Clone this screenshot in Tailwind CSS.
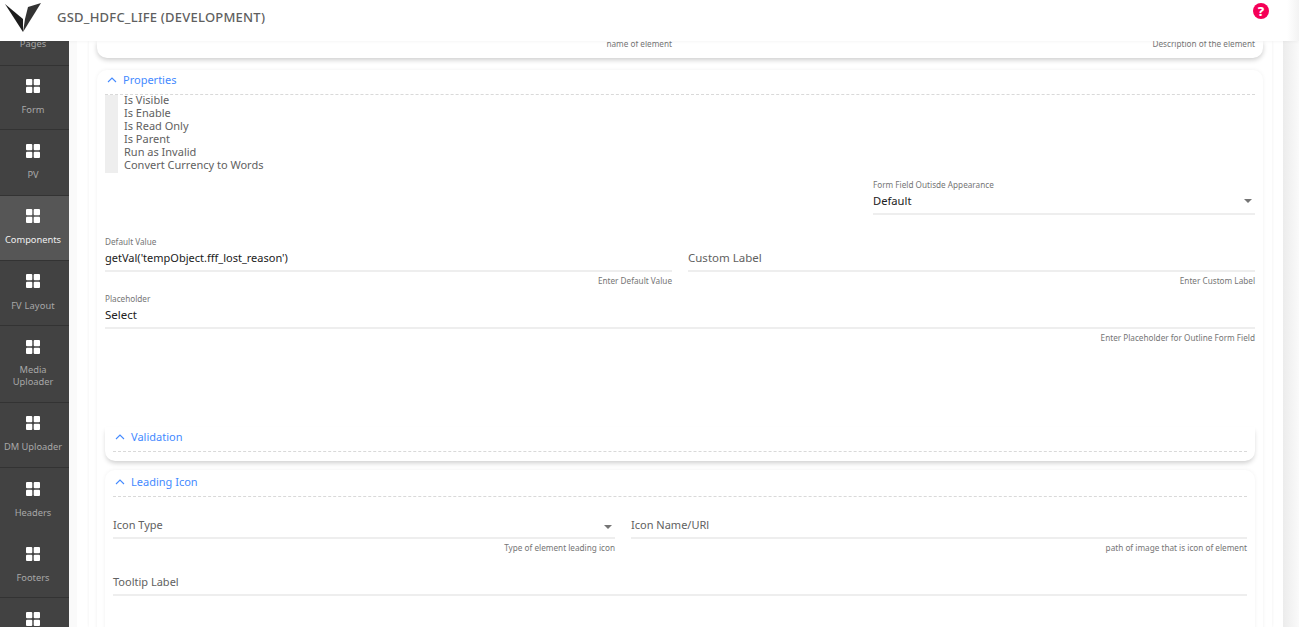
<!DOCTYPE html>
<html>
<head>
<meta charset="utf-8">
<script src="https://cdn.jsdelivr.net/npm/@tailwindcss/browser@4"></script>
</head>
<body class="h-[627px] w-[1299px] overflow-hidden bg-white font-['Noto_Sans','Open_Sans',sans-serif] text-[#616161]">
<header class="relative z-10 flex h-[41px] items-center bg-white pl-[5px] shadow-[0_1px_3px_rgba(0,0,0,0.04)]">
  <svg width="37" height="30" viewBox="0 0 37 30" class="-mt-[5px] shrink-0"><path d="M0 1 L18 16 L18 29 Z" fill="#1c1c1c"/><path d="M36 0 L23 4 L20 16 L18 29 Z" fill="#333"/></svg>
  <div class="-mt-[5px] ml-[15px] text-[13px] font-medium tracking-[0.22px] text-[#5f5f5f]">GSD_HDFC_LIFE (DEVELOPMENT)</div>
  <div class="ml-auto mr-[30px] -mt-[19px] flex h-4 w-4 items-center justify-center rounded-full bg-[#f50057] text-[13px] font-extrabold leading-none text-white">?</div>
  <div class="absolute right-0 top-0 h-full w-[12px] bg-gradient-to-r from-white to-[#f3f3f3]"></div>
</header>
<div class="flex h-[586px] overflow-hidden">
  <nav class="w-[69px] shrink-0 bg-[#424242] text-center text-[9.3px] leading-[12px] text-[#a8a8a8]">
    <div class="flex h-[25px] items-start justify-center border-b border-[#333] pr-[3px]"><span class="-mt-[3px]">Pages</span></div>
    <a class="flex h-[64px] flex-col items-center border-b border-[#333] pr-[3px] pt-[13px]"><svg width="14" height="14" viewBox="0 0 14 14" fill="#fff"><rect width="6.3" height="6.3" rx="1"/><rect x="7.7" width="6.3" height="6.3" rx="1"/><rect y="7.7" width="6.3" height="6.3" rx="1"/><rect x="7.7" y="7.7" width="6.3" height="6.3" rx="1"/></svg><span class="mt-[11px]">Form</span></a>
    <a class="flex h-[66px] flex-col items-center border-b border-[#333] pr-[3px] pt-[14px]"><svg width="14" height="14" viewBox="0 0 14 14" fill="#fff"><rect width="6.3" height="6.3" rx="1"/><rect x="7.7" width="6.3" height="6.3" rx="1"/><rect y="7.7" width="6.3" height="6.3" rx="1"/><rect x="7.7" y="7.7" width="6.3" height="6.3" rx="1"/></svg><span class="mt-[11px]">PV</span></a>
    <a class="flex h-[65px] flex-col items-center border-b border-[#333] bg-[#565656] pr-[3px] pt-[13px] text-[#f0f0f0]"><svg width="14" height="14" viewBox="0 0 14 14" fill="#fff"><rect width="6.3" height="6.3" rx="1"/><rect x="7.7" width="6.3" height="6.3" rx="1"/><rect y="7.7" width="6.3" height="6.3" rx="1"/><rect x="7.7" y="7.7" width="6.3" height="6.3" rx="1"/></svg><span class="mt-[11px]">Components</span></a>
    <a class="flex h-[65px] flex-col items-center border-b border-[#333] pr-[3px] pt-[13px]"><svg width="14" height="14" viewBox="0 0 14 14" fill="#fff"><rect width="6.3" height="6.3" rx="1"/><rect x="7.7" width="6.3" height="6.3" rx="1"/><rect y="7.7" width="6.3" height="6.3" rx="1"/><rect x="7.7" y="7.7" width="6.3" height="6.3" rx="1"/></svg><span class="mt-[12px] tracking-[0.15px]">FV Layout</span></a>
    <a class="flex h-[77px] flex-col items-center border-b border-[#333] pr-[3px] pt-[14px]"><svg width="14" height="14" viewBox="0 0 14 14" fill="#fff"><rect width="6.3" height="6.3" rx="1"/><rect x="7.7" width="6.3" height="6.3" rx="1"/><rect y="7.7" width="6.3" height="6.3" rx="1"/><rect x="7.7" y="7.7" width="6.3" height="6.3" rx="1"/></svg><span class="mt-[10px] leading-[12px]">Media<br>Uploader</span></a>
    <a class="flex h-[65px] flex-col items-center border-b border-[#333] pr-[3px] pt-[13px]"><svg width="14" height="14" viewBox="0 0 14 14" fill="#fff"><rect width="6.3" height="6.3" rx="1"/><rect x="7.7" width="6.3" height="6.3" rx="1"/><rect y="7.7" width="6.3" height="6.3" rx="1"/><rect x="7.7" y="7.7" width="6.3" height="6.3" rx="1"/></svg><span class="mt-[11px]">DM Uploader</span></a>
    <a class="flex h-[65px] flex-col items-center pr-[3px] pt-[14px]"><svg width="14" height="14" viewBox="0 0 14 14" fill="#fff"><rect width="6.3" height="6.3" rx="1"/><rect x="7.7" width="6.3" height="6.3" rx="1"/><rect y="7.7" width="6.3" height="6.3" rx="1"/><rect x="7.7" y="7.7" width="6.3" height="6.3" rx="1"/></svg><span class="mt-[11px]">Headers</span></a>
    <a class="flex h-[65px] flex-col items-center border-b border-[#333] pr-[3px] pt-[14px]"><svg width="14" height="14" viewBox="0 0 14 14" fill="#fff"><rect width="6.3" height="6.3" rx="1"/><rect x="7.7" width="6.3" height="6.3" rx="1"/><rect y="7.7" width="6.3" height="6.3" rx="1"/><rect x="7.7" y="7.7" width="6.3" height="6.3" rx="1"/></svg><span class="mt-[11px]">Footers</span></a>
    <a class="flex flex-col items-center pr-[3px] pt-[14px]"><svg width="14" height="14" viewBox="0 0 14 14" fill="#fff"><rect width="6.3" height="6.3" rx="1"/><rect x="7.7" width="6.3" height="6.3" rx="1"/><rect y="7.7" width="6.3" height="6.3" rx="1"/><rect x="7.7" y="7.7" width="6.3" height="6.3" rx="1"/></svg></a>
  </nav>
  <div class="flex min-w-0 flex-1 bg-[#fafafa]">
    <main class="ml-[8px] w-[1206px] shrink-0 bg-white">
      <div class="ml-[12px] mr-[11px] h-full pl-[8px] pr-[9px] shadow-[0_0_3px_rgba(0,0,0,0.07)]">
        <section class="relative h-[17px] rounded-b-[10px] bg-white shadow-[0_2px_5px_rgba(0,0,0,0.2)]">
          <div class="absolute right-[8px] -top-[2px] text-[8.2px] leading-[10px] text-[#757575]">Description of the element</div>
          <div class="absolute right-[591px] -top-[2px] text-[8.2px] leading-[10px] text-[#757575]">name of element</div>
        </section>
        <section class="mt-[12px] rounded-t-[10px] px-[8px] shadow-[0_0_4px_rgba(0,0,0,0.06)]">
          <h3 class="flex h-[25px] items-center gap-[6px] border-b border-dashed border-[#d9d9d9] pb-[4px] pl-[2px] text-[11px] text-[#448aff]"><svg width="10" height="10" viewBox="0 0 10 10" fill="none" stroke="#448aff" stroke-width="1.1"><path d="M1 7 L5 3 L9 7"/></svg>Properties</h3>
          <div class="flex h-[78px] text-[11px] leading-[13px]">
            <div class="w-[13px] bg-[#eeeeee]"></div>
            <ul class="-mt-[2px] ml-[6px]"><li>Is Visible</li><li>Is Enable</li><li>Is Read Only</li><li>Is Parent</li><li>Run as Invalid</li><li>Convert Currency to Words</li></ul>
          </div>
          <div class="ml-[768px] mt-[6px] h-[36px] border-b-2 border-[#eeeeee]">
            <div class="text-[8.2px] leading-[12px] text-[#757575]">Form Field Outisde Appearance</div>
            <div class="flex items-center justify-between text-[11.2px] leading-[20px] text-[#212121]">Default<span class="mr-[3px] h-0 w-0 border-x-[4px] border-t-[4px] border-x-transparent border-t-[#757575]"></span></div>
          </div>
          <div class="mt-[21px] grid grid-cols-[567px_567px] gap-x-[16px]">
            <div>
              <div class="h-[36px] border-b-2 border-[#eeeeee]"><div class="text-[8.2px] leading-[12px] text-[#757575]">Default Value</div><div class="text-[11px] leading-[20px] text-[#212121]">getVal('tempObject.fff_lost_reason')</div></div>
              <div class="mt-[3px] text-right text-[8.2px] leading-[12px] text-[#757575]">Enter Default Value</div>
            </div>
            <div>
              <div class="flex h-[36px] items-end border-b-2 border-[#eeeeee] pb-[2px] text-[11.5px] leading-[20px]">Custom Label</div>
              <div class="mt-[3px] text-right text-[8.2px] leading-[12px] text-[#757575]">Enter Custom Label</div>
            </div>
          </div>
          <div class="mt-[6px] h-[36px] border-b-2 border-[#eeeeee]"><div class="text-[8.2px] leading-[12px] text-[#757575]">Placeholder</div><div class="text-[11.5px] leading-[20px] text-[#212121]">Select</div></div>
          <div class="mt-[3px] text-right text-[8.2px] leading-[12px] text-[#757575]">Enter Placeholder for Outline Form Field</div>
          <div class="mt-[83px] h-[34px] rounded-b-[10px] bg-white px-[8px] shadow-[0_3px_5px_-1px_rgba(0,0,0,0.2)]">
            <h3 class="flex h-[25px] items-center gap-[6px] border-b border-dashed border-[#d9d9d9] pb-[4px] pl-[2px] text-[11px] text-[#448aff]"><svg width="10" height="10" viewBox="0 0 10 10" fill="none" stroke="#448aff" stroke-width="1.1"><path d="M1 7 L5 3 L9 7"/></svg>Validation</h3>
          </div>
          <div class="mt-[9px] h-[180px] rounded-t-[10px] px-[8px] shadow-[0_0_4px_rgba(0,0,0,0.06)]">
            <h3 class="flex h-[27px] items-center gap-[6px] border-b border-dashed border-[#d9d9d9] pb-[2px] pl-[2px] text-[11px] text-[#448aff]"><svg width="10" height="10" viewBox="0 0 10 10" fill="none" stroke="#448aff" stroke-width="1.1"><path d="M1 7 L5 3 L9 7"/></svg>Leading Icon</h3>
            <div class="mt-[18px] grid grid-cols-[502px_616px] gap-x-[16px]">
              <div>
                <div class="flex h-[24px] items-center justify-between border-b-2 border-[#eeeeee] pb-[2px] text-[11px]">Icon Type<span class="mr-[3px] mt-[3px] h-0 w-0 border-x-[4px] border-t-[4px] border-x-transparent border-t-[#757575]"></span></div>
                <div class="mt-[3px] text-right text-[8.2px] leading-[12px] text-[#757575]">Type of element leading icon</div>
              </div>
              <div>
                <div class="flex h-[24px] items-center border-b-2 border-[#eeeeee] pb-[2px] text-[11px]">Icon Name/URl</div>
                <div class="mt-[3px] text-right text-[8.2px] leading-[12px] text-[#757575]">path of image that is icon of element</div>
              </div>
            </div>
            <div class="mt-[18px] flex h-[24px] items-center border-b-2 border-[#eeeeee] pb-[2px] text-[11px]">Tooltip Label</div>
          </div>
        </section>
      </div>
    </main>
    <div class="w-[16px] bg-gradient-to-r from-[#ececec] to-[#fafafa]"></div>
  </div>
</div>
</body>
</html>
